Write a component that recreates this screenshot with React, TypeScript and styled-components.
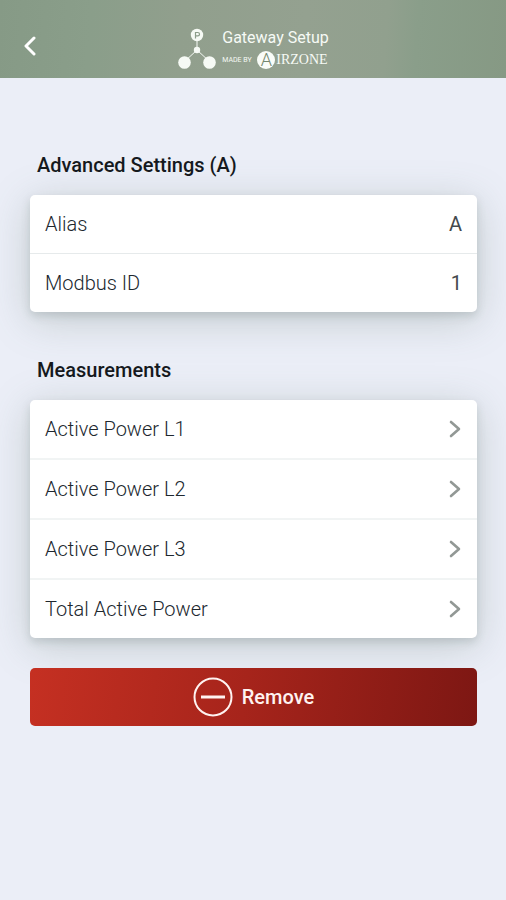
import React from "react";
import styled, { createGlobalStyle } from "styled-components";

const GlobalStyle = createGlobalStyle`
  *, *::before, *::after { box-sizing: border-box; }
  body {
    margin: 0;
    background: #ebeef7;
    color: #20272e;
    font-family: Roboto, "Liberation Sans", sans-serif;
  }
`;

const Header = styled.header`
  display: grid;
  grid-template-columns: 60px 1fr 60px;
  align-items: end;
  height: 78px;
  padding-bottom: 6px;
  background: linear-gradient(94deg, #869a86 0%, #8a9e8a 18%, #919f8d 36%, #94a190 60%, #91a08e 76%, #8a9e8a 82%, #869984 100%);
`;

const BackButton = styled.button`
  display: flex;
  align-items: center;
  justify-content: center;
  height: 52px;
  padding: 0;
  border: 0;
  background: none;
  color: #fff;
  cursor: pointer;
`;

const Brand = styled.div`
  display: flex;
  justify-content: center;
  gap: 6px;
  padding-left: 1px;
  color: #f6faf5;
`;

const BrandText = styled.div`
  display: flex;
  flex-direction: column;
`;

const Title = styled.h1`
  margin: 0;
  font-size: 16px;
  font-weight: 400;
  line-height: 20px;
  white-space: nowrap;
`;

const Maker = styled.div`
  display: flex;
  align-items: center;
  height: 24px;
`;

const MadeBy = styled.span`
  width: 35px;
  font-size: 7px;
  font-weight: 400;
  line-height: 8px;
  white-space: nowrap;
`;

const Initial = styled.span`
  display: flex;
  align-items: center;
  justify-content: center;
  width: 18px;
  height: 18px;
  margin-right: 1px;
  border-radius: 50%;
  background: #f9fcf8;
  color: #74876f;
  font: 300 18px/18px Roboto, "Liberation Sans", sans-serif;
`;

const MakerName = styled.span`
  font: 14px/20px "Liberation Serif", serif;
`;

const Main = styled.main`
  display: flex;
  flex-direction: column;
  padding: 72px 29px 32px 30px;
`;

const Section = styled.section`
  margin-bottom: 30px;

  & + & {
    margin-top: 13px;
  }
`;

const SectionTitle = styled.h2`
  position: relative;
  margin: 0 0 15px;
  padding-left: 7px;
  color: #15191d;
  font-size: 20px;
  font-weight: 500;
  line-height: 30px;
`;

const List = styled.ul<{ $divider: number }>`
  margin: 0;
  padding: 0;
  border-radius: 5px;
  background: #fff;
  box-shadow: 0 4px 8px rgba(95, 112, 108, 0.22), 0 8px 40px rgba(95, 115, 105, 0.28);
  list-style: none;

  li + li {
    border-top: ${({ $divider }) => $divider}px solid ${({ $divider }) => ($divider > 1 ? "#f1f4f4" : "#e6eaeb")};
  }
`;

const Row = styled.div`
  display: flex;
  align-items: center;
  justify-content: space-between;
  width: 100%;
  height: 58px;
  padding: 0 15px;
  border: 0;
  background: none;
  color: inherit;
  font: 300 20px/28px Roboto, "Liberation Sans", sans-serif;
  text-align: left;
`;

const RowButton = styled(Row).attrs({ as: "button", type: "button" })`
  cursor: pointer;
`;

const Value = styled.span`
  color: #44494d;
  font-weight: 400;
`;

const RemoveButton = styled.button`
  position: relative;
  display: flex;
  align-items: center;
  justify-content: center;
  gap: 9px;
  height: 58px;
  border: 0;
  border-radius: 5px;
  background: linear-gradient(98deg, #c53022 0%, #a6241b 48%, #7d1713 100%);
  color: #fff3f1;
  font: 500 20px/28px Roboto, "Liberation Sans", sans-serif;
  cursor: pointer;
`;

const BackIcon = () => (
  <svg width="14" height="20" viewBox="0 0 14 20" fill="none" aria-hidden="true">
    <path d="M11 2 3 10l8 8" stroke="currentColor" strokeWidth="3" strokeLinecap="round" strokeLinejoin="round" />
  </svg>
);

const ChevronIcon = () => (
  <svg width="15" height="18" viewBox="0 0 15 18" fill="none" aria-hidden="true">
    <path d="m4 2 8 7-8 7" stroke="#929895" strokeWidth="2.6" strokeLinecap="round" strokeLinejoin="round" />
  </svg>
);

const NetworkLogo = () => (
  <svg width="38" height="42" viewBox="0 0 38 42" fill="currentColor" aria-hidden="true">
    <path d="M19 12v10M6 34 19 22l13 12" fill="none" stroke="currentColor" strokeWidth="1" />
    <circle cx="19" cy="7" r="6.2" />
    <circle cx="19" cy="22" r="3.2" />
    <circle cx="6.500" cy="34.500" r="6.300" />
    <circle cx="31.500" cy="34.500" r="6.300" />
    <path d="M17.500 10.500V4.500h2.300a1.700 1.700 0 0 1 0 3.400h-2.300" fill="none" stroke="#8c9d8a" strokeWidth="1.200" />
  </svg>
);

const MinusCircleIcon = () => (
  <svg width="40" height="40" viewBox="0 0 40 40" fill="none" stroke="currentColor" aria-hidden="true">
    <circle cx="20" cy="20" r="18.500" strokeWidth="2" />
    <path d="M8 20h24" strokeWidth="3" />
  </svg>
);

const settings = [
  { label: "Alias", value: "A" },
  { label: "Modbus ID", value: "1" },
];

const measurements = ["Active Power L1", "Active Power L2", "Active Power L3", "Total Active Power"];

export default function App() {
  return (
    <>
      <GlobalStyle />
      <Header>
        <BackButton type="button" aria-label="Back">
          <BackIcon />
        </BackButton>
        <Brand>
          <NetworkLogo />
          <BrandText>
            <Title>Gateway Setup</Title>
            <Maker>
              <MadeBy>MADE BY</MadeBy>
              <Initial>A</Initial>
              <MakerName>IRZONE</MakerName>
            </Maker>
          </BrandText>
        </Brand>
      </Header>
      <Main>
        <Section>
          <SectionTitle>Advanced Settings (A)</SectionTitle>
          <List $divider={1}>
            {settings.map(({ label, value }) => (
              <li key={label}>
                <Row>
                  <span>{label}</span>
                  <Value>{value}</Value>
                </Row>
              </li>
            ))}
          </List>
        </Section>
        <Section>
          <SectionTitle>Measurements</SectionTitle>
          <List $divider={2}>
            {measurements.map((label) => (
              <li key={label}>
                <RowButton>
                  <span>{label}</span>
                  <ChevronIcon />
                </RowButton>
              </li>
            ))}
          </List>
        </Section>
        <RemoveButton type="button">
          <MinusCircleIcon />
          Remove
        </RemoveButton>
      </Main>
    </>
  );
}
